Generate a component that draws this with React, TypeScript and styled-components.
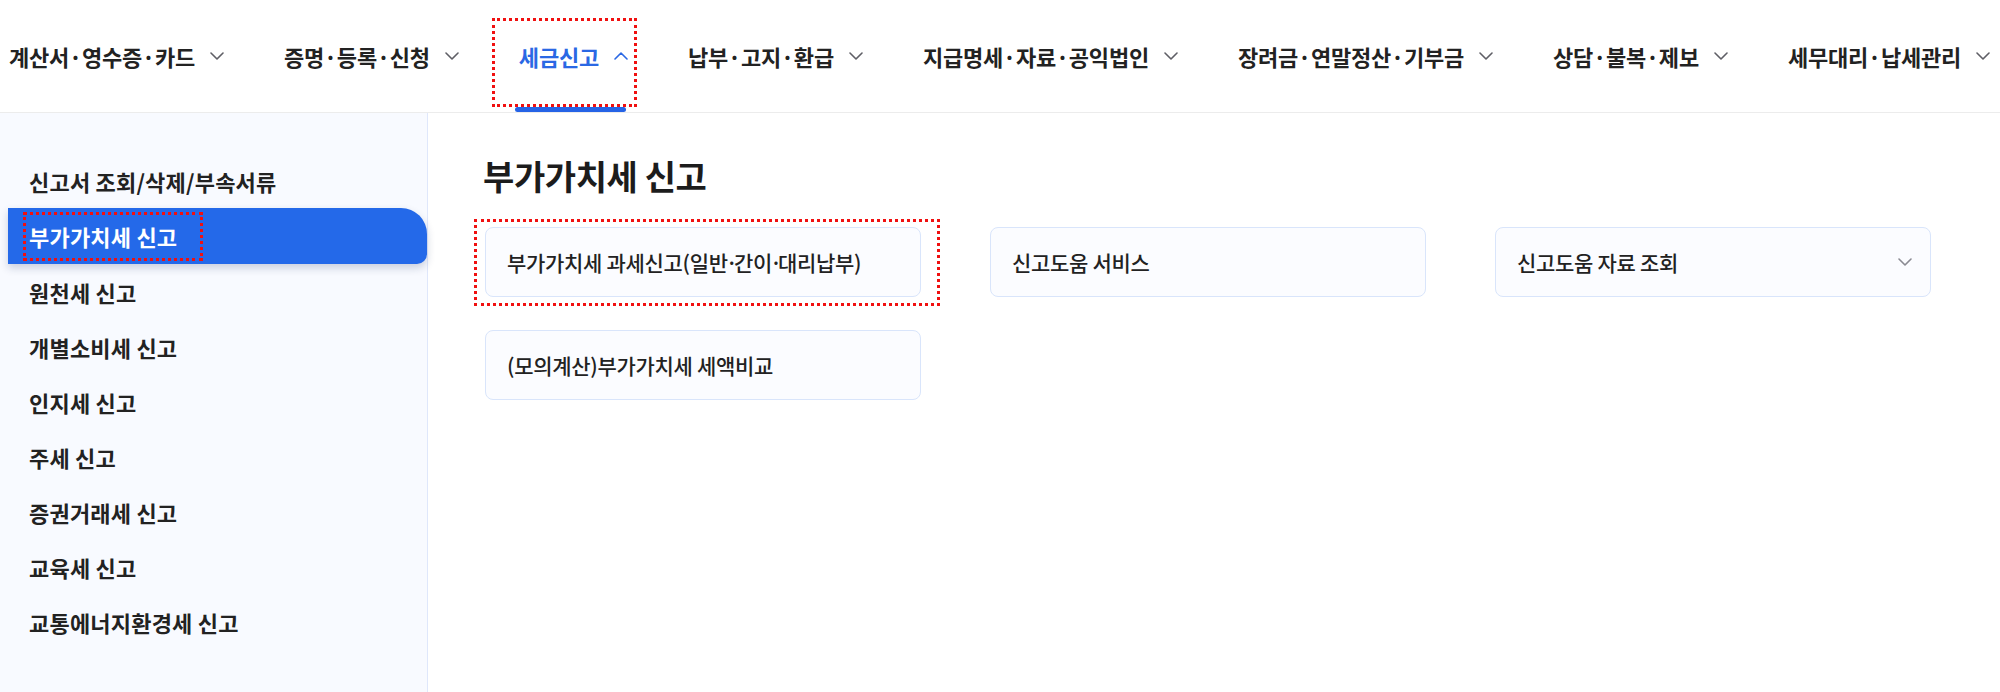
import styled, { createGlobalStyle } from 'styled-components';

const GlobalStyle = createGlobalStyle`
  html, body {
    margin: 0;
    padding: 0;
    background: #fff;
  }

  body {
    font-family: "Noto Sans CJK KR", "Noto Sans", sans-serif;
    color: #222;
  }
`;

const StyledPage = styled.div`
  width: 2000px;
  height: 692px;
  overflow: hidden;
  display: flex;
  flex-direction: column;
`;

const StyledHeader = styled.header`
  height: 112px;
  flex-shrink: 0;
  display: flex;
  align-items: stretch;
  gap: 60px;
  padding-left: 9px;
  border-bottom: 1px solid #ececec;
  white-space: nowrap;
`;

const StyledNavItem = styled.div<{ $active?: boolean }>`
  position: relative;
  display: flex;
  align-items: center;
  gap: 15px;

  font-size: 22px;
  font-weight: 600;
  letter-spacing: -0.2px;
  color: ${ ({$active}) => $active ? '#2a68e4' : '#222' };

  &::after {
    content: '';
    display: ${ ({$active}) => $active ? 'block' : 'none' };
    position: absolute;
    left: -4px;
    right: 2px;
    bottom: 0;
    height: 5px;
    border-radius: 3px;
    background: #2563e6;
  }
`;

const StyledBody = styled.div`
  flex-grow: 1;
  display: flex;
  align-items: stretch;
`;

const StyledSidebar = styled.nav`
  width: 427px;
  flex-shrink: 0;
  padding-top: 40px;
  background: #f8faff;
  border-right: 1px solid #dfe7fb;
`;

const StyledSideItem = styled.div<{ $active?: boolean }>`
  position: relative;
  height: ${ ({$active}) => $active ? '56px' : '55.1px' };
  display: flex;
  align-items: center;
  padding-left: ${ ({$active}) => $active ? '21px' : '29px' };
  margin-left: ${ ({$active}) => $active ? '8px' : '0' };

  font-size: 22px;
  font-weight: 700;
  letter-spacing: 0.2px;
  color: ${ ({$active}) => $active ? '#fff' : '#222' };
  background: ${ ({$active}) => $active ? '#2469e9' : 'transparent' };
  border-radius: 0 26px 10px 0;
  box-shadow: ${ ({$active}) => $active ? '0 4px 8px rgba(20, 40, 90, 0.2)' : 'none' };
`;

const StyledMain = styled.main`
  flex-grow: 1;
  padding: 42px 0 0 55px;
`;

const StyledTitle = styled.h2`
  margin: 0 0 31px;
  font-size: 34px;
  line-height: 41px;
  font-weight: 700;
  letter-spacing: -0.4px;
  color: #1c1c1c;
`;

const StyledGrid = styled.div`
  display: grid;
  grid-template-columns: repeat(3, 436px);
  column-gap: 69px;
  row-gap: 33px;
  padding-left: 2px;
`;

const StyledCard = styled.div`
  position: relative;
  height: 70px;
  box-sizing: border-box;
  display: flex;
  align-items: center;
  justify-content: space-between;
  padding: 0 18px 0 21px;

  font-size: 21px;
  font-weight: 500;
  letter-spacing: -0.3px;
  color: #222;
  background: #fbfcff;
  border: 1.5px solid #d9e5fb;
  border-radius: 8px;
`;

const StyledDot = styled.span`
  letter-spacing: -4px;
  margin-left: -2px;
`;

const StyledAnnotation = styled.span<{ $top: number; $left: number; $right: number; $bottom: number }>`
  position: absolute;
  top: ${ ({$top}) => $top }px;
  left: ${ ({$left}) => $left }px;
  right: ${ ({$right}) => $right }px;
  bottom: ${ ({$bottom}) => $bottom }px;
  border: 3px dotted #f01010;
  pointer-events: none;
`;

function Chevron({up, color}: { up?: boolean; color: string }) {
  return (
    <svg width="14" height="8" viewBox="0 0 14 8" fill="none">
      <polyline points={ up ? '1,7 7,1 13,7' : '1,1 7,7 13,1' }
                stroke={ color }
                strokeWidth="1.6"
                strokeLinecap="round"
                strokeLinejoin="round" />
    </svg>
  );
}

const navItems = [
  '계산서·영수증·카드',
  '증명·등록·신청',
  '세금신고',
  '납부·고지·환급',
  '지급명세·자료·공익법인',
  '장려금·연말정산·기부금',
  '상담·불복·제보',
  '세무대리·납세관리',
];

const sideItems = [
  '신고서 조회/삭제/부속서류',
  '부가가치세 신고',
  '원천세 신고',
  '개별소비세 신고',
  '인지세 신고',
  '주세 신고',
  '증권거래세 신고',
  '교육세 신고',
  '교통에너지환경세 신고',
];

function App() {
  return (
    <StyledPage>
      <GlobalStyle />
      <StyledHeader>
        { navItems.map((label) => {
          const active = label === '세금신고';
          return (
            <StyledNavItem key={ label } $active={ active }>
              <span>{ label }</span>
              <Chevron up={ active } color={ active ? '#2a68e4' : '#5f5f66' } />
              { active && <StyledAnnotation $top={ 18 } $left={ -27 } $right={ -9 } $bottom={ 5 } /> }
            </StyledNavItem>
          );
        }) }
      </StyledHeader>
      <StyledBody>
        <StyledSidebar>
          { sideItems.map((label) => {
            const active = label === '부가가치세 신고';
            return (
              <StyledSideItem key={ label } $active={ active }>
                { label }
                { active && <StyledAnnotation $top={ 4 } $left={ 15 } $right={ 224 } $bottom={ 3 } /> }
              </StyledSideItem>
            );
          }) }
        </StyledSidebar>
        <StyledMain>
          <StyledTitle>부가가치세 신고</StyledTitle>
          <StyledGrid>
            <StyledCard>
              <span>부가가치세 과세신고(일반<StyledDot>·</StyledDot>간이<StyledDot>·</StyledDot>대리납부)</span>
              <StyledAnnotation $top={ -9 } $left={ -12 } $right={ -20 } $bottom={ -10 } />
            </StyledCard>
            <StyledCard>신고도움 서비스</StyledCard>
            <StyledCard>
              신고도움 자료 조회
              <Chevron color="#8a8a92" />
            </StyledCard>
            <StyledCard>(모의계산)부가가치세 세액비교</StyledCard>
          </StyledGrid>
        </StyledMain>
      </StyledBody>
    </StyledPage>
  );
}

export default App;
